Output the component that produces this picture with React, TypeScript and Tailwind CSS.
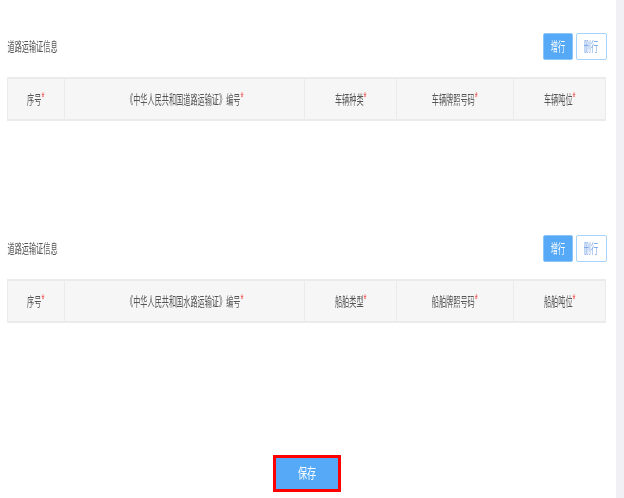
import React from 'react';

interface SectionProps {
  title: string;
  columns: string[];
  className: string;
}

// text in the picture is squeezed sideways, so the labels are narrowed
const Label: React.FC<{ text: string; required?: boolean }> = ({ text, required }) => (
  <span className="inline-block whitespace-nowrap scale-x-[0.55] text-[13px] leading-[14px] text-[#555] blur-[0.3px]">
    {text}
    {required && <span className="relative -top-[2px] text-[14px] text-[#f04848]">*</span>}
  </span>
);

const Section: React.FC<SectionProps> = ({ title, columns, className }) => (
  <section className={className}>
    <div className="flex h-[27px] w-[600px] items-center justify-between">
      <div className="flex w-[50px] justify-center pt-[1px]">
        <Label text={title} />
      </div>
      <div className="flex gap-[3px]">
        <button className="flex h-[27px] w-[30px] items-center justify-center rounded-[2px] border border-[#8cc5f8] bg-[#55a9f6]">
          <span className="inline-block whitespace-nowrap scale-x-[0.55] text-[13px] text-white blur-[0.3px]">增行</span>
        </button>
        <button className="flex h-[27px] w-[31px] items-center justify-center rounded-[2px] border border-[#a8d3fa] bg-white">
          <span className="inline-block whitespace-nowrap scale-x-[0.55] text-[13px] text-[#7fa8e8] blur-[0.3px]">删行</span>
        </button>
      </div>
    </div>
    <div className="mt-[17px] grid h-[44px] w-[599px] grid-cols-[57px_240px_92px_117px_91px] border-x border-b-2 border-t-2 border-[#ebebeb] bg-[#f6f6f6]">
      {columns.map((col, i) => (
        <div
          key={col}
          className={`flex items-center justify-center ${i < columns.length - 1 ? 'border-r border-[#ebebeb]' : ''}`}
        >
          <Label text={col} required />
        </div>
      ))}
    </div>
  </section>
);

export default function App() {
  return (
    <div className="flex h-[498px] w-[624px] overflow-hidden bg-white font-['Liberation_Sans','Noto_Sans_CJK_SC',sans-serif]">
      <main className="flex w-[616px] flex-col pl-[7px]">
        <Section
          className="pt-[33px]"
          title="道路运输证信息"
          columns={['序号', '《中华人民共和国道路运输证》编号', '车辆种类', '车辆牌照号码', '车辆吨位']}
        />
        <Section
          className="pt-[114px]"
          title="道路运输证信息"
          columns={['序号', '《中华人民共和国水路运输证》编号', '船舶类型', '船舶牌照号码', '船舶吨位']}
        />
        <div className="mt-[132px] flex justify-center pr-[10px]">
          <button className="flex h-[37px] w-[68px] items-center justify-center border-[3px] border-[#ff0000] bg-[#55a9f6]">
            <span className="inline-block scale-x-[0.65] text-[14px] text-white blur-[0.3px]">保存</span>
          </button>
        </div>
      </main>
      <div className="h-full w-[8px] bg-[#f0f0f5]" />
    </div>
  );
}
